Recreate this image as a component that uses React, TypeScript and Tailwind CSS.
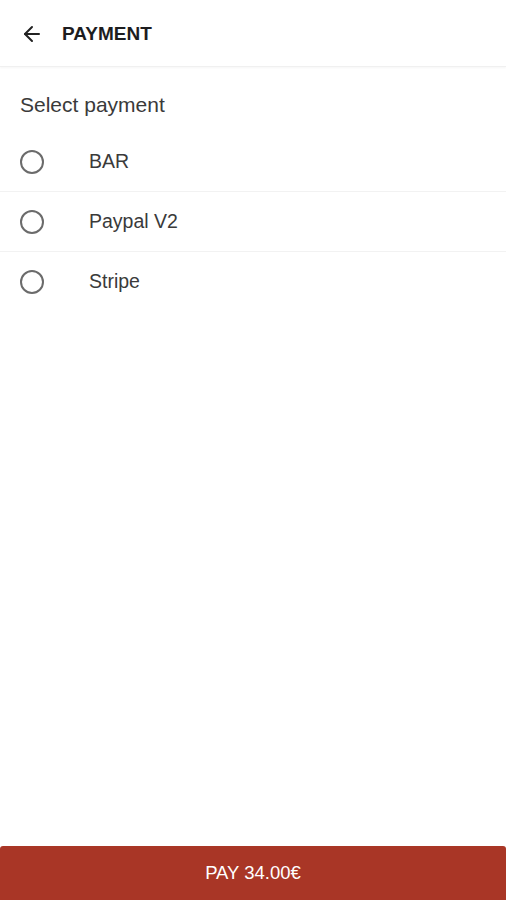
import { ArrowLeft } from 'lucide-react'

const methods = ['BAR', 'Paypal V2', 'Stripe']

export default function App() {
  return (
    <div className="flex h-[900px] flex-col bg-white font-['Liberation_Sans',Arial,sans-serif] text-[#333]">
      {/* Header */}
      <div className="flex h-[67px] items-center border-b border-[#f0f0f0] px-5 pt-[2px] shadow-[0_1px_2px_rgba(0,0,0,0.04)]">
        <ArrowLeft className="h-6 w-6 text-[#222]" strokeWidth={2} />
        <span className="ml-[18px] text-[19px] font-bold text-[#1d1d1f]">PAYMENT</span>
      </div>

      {/* Payment methods */}
      <div className="flex-1">
        <p className="px-5 pt-[26px] text-[21px] leading-6 text-[#3a3a3a]">Select payment</p>
        <div className="mt-[15px]">
          {methods.map((m, i) => (
            <div
              key={m}
              className={`flex h-[60px] items-center px-5 ${i < methods.length - 1 ? 'border-b border-[#f2f2f2]' : ''}`}
            >
              <span className="h-[24px] w-[24px] rounded-full border-2 border-[#6b6b6b]" />
              <span className="ml-[45px] text-[19.5px] text-[#3a3a3a]">{m}</span>
            </div>
          ))}
        </div>
      </div>

      {/* Pay button */}
      <button className="h-[54px] w-full rounded-t-[3px] bg-[#a93626] text-[18.5px] text-white">
        PAY 34.00€
      </button>
    </div>
  )
}
